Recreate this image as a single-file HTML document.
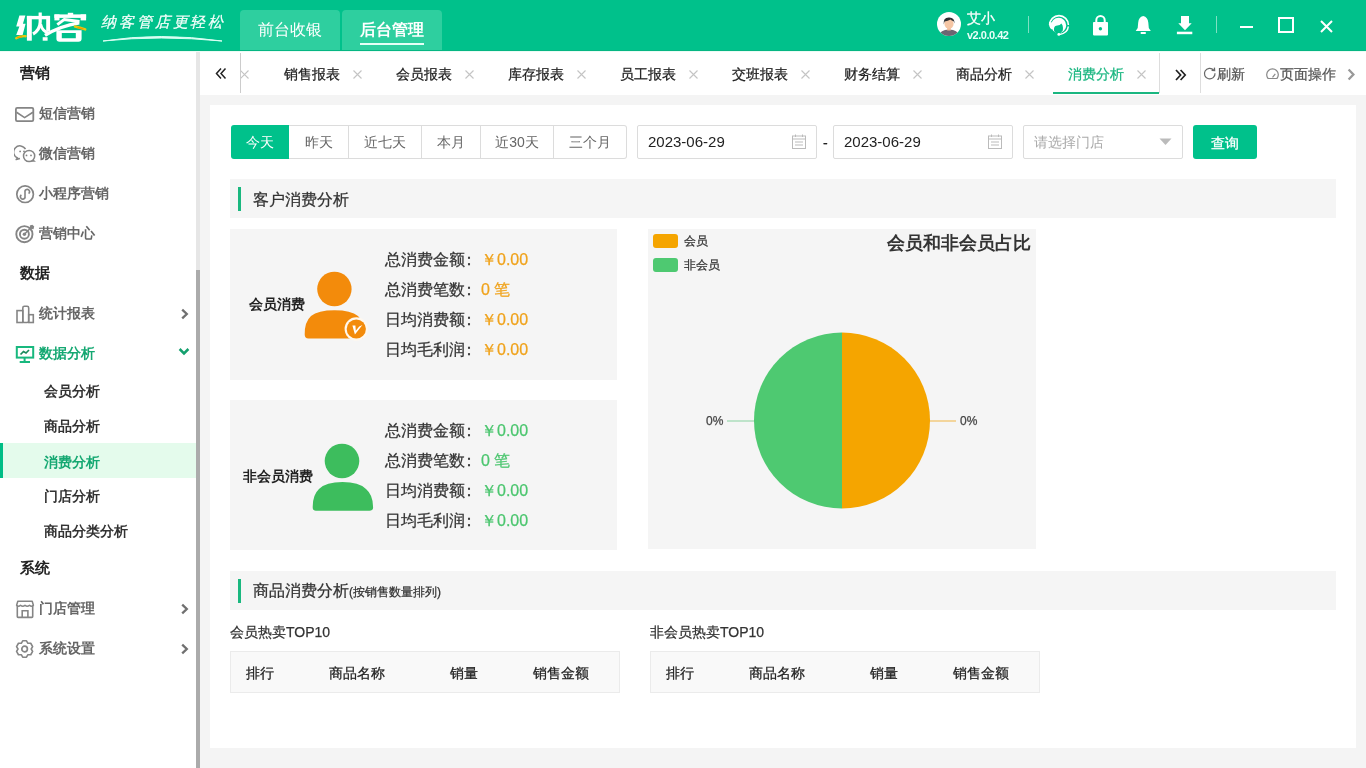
<!DOCTYPE html>
<html><head><meta charset="utf-8">
<style>
*{box-sizing:border-box;margin:0;padding:0}
html,body{width:1366px;height:768px;overflow:hidden;background:#f4f4f4;font-family:"Liberation Sans",sans-serif;color:#333}
.a{position:absolute}
.t{position:absolute;white-space:nowrap;line-height:20px;-webkit-text-stroke:0.25px currentColor}
.t[style*="bold"],.sh,.si,.ss{-webkit-text-stroke:0}
#hdr{left:0;top:0;width:1366px;height:51px;background:#00c18b}
.htab{top:10px;height:40px;width:100px;background:#2ecf9f;border-radius:4px 4px 0 0;color:#fff;font-size:16px;line-height:40px;text-align:center}
#side{left:0;top:50px;width:196px;height:718px;background:#fff}
#sb{left:196px;top:50px;width:4px;height:718px;background:#e6e6e6}
#sbt{left:196px;top:270px;width:4px;height:498px;background:#ababab}
.sh{left:20px;font-size:15px;font-weight:bold;color:#222}
.si{left:39px;font-size:14px;font-weight:bold;color:#666}
.ss{left:44px;font-size:14px;font-weight:bold;color:#333}
.ic{position:absolute}
#tabbar{left:200px;top:50px;width:1166px;height:45px;background:#fff}
.tb{top:64px;font-size:14px;color:#222}
.tx{top:64px;font-size:15px;color:#bbb}
#card{left:210px;top:105px;width:1146px;height:643px;background:#fff}
.btn{top:125px;height:34px;font-size:14px;line-height:32px;color:#666;text-align:center;border:1px solid #dcdcdc;border-left:none;background:#fff}
.inp{top:125px;height:34px;border:1px solid #dcdcdc;border-radius:2px;background:#fff;font-size:15px;line-height:31px;color:#222}
.sec{left:230px;width:1106px;height:39px;background:#f5f5f5}
.secb{position:absolute;left:8px;width:3px;background:#1ab87f}
.box{background:#f5f5f5}
.ln{left:385px;font-size:16px;color:#333;line-height:20px}
.vo{color:#f0a31c}
.vg{color:#4cc66f}
.th{height:42px;border:1px solid #ebebeb;background:#f9f9f9}
.thc{top:662.5px;font-size:14px;color:#222}
</style></head><body><div style="will-change:transform;position:absolute;left:0;top:0;width:1366px;height:768px">

<!-- header -->
<div id="hdr" class="a"></div>
<svg class="a" style="left:0;top:0" width="95" height="50" viewBox="0 0 95 50">
 <path d="M19.4 15.4 L25.4 15.4 L22.9 23.8 L25.6 23.8 L22.6 35 L16.2 35 L19.4 26.6 L16.2 26.6 Z" fill="#fff"/>
 <path d="M16.2 38.2 Q20 35.8 25.6 36.2" stroke="#e9c70f" stroke-width="2.4" fill="none" stroke-linecap="round"/>
 <path d="M17.6 37.6 Q19.5 36.9 21.5 36.9" stroke="#f29a00" stroke-width="1.3" fill="none" stroke-linecap="round"/>
 <rect x="26.9" y="15.9" width="4.9" height="24.8" fill="#fff"/>
 <rect x="26.9" y="15.9" width="23" height="3.4" fill="#fff"/>
 <rect x="46.2" y="15.9" width="3.9" height="15.5" fill="#fff"/>
 <path d="M40.2 12.5 V22 Q40 30 33 34" stroke="#fff" stroke-width="3.2" fill="none"/>
 <path d="M40.5 24 Q42 31 49 33.5" stroke="#fff" stroke-width="3" fill="none"/>
 <rect x="42.7" y="37.2" width="4.9" height="3.5" fill="#fff"/>
 <rect x="67.8" y="12.8" width="5.4" height="3" fill="#fff"/>
 <rect x="54.4" y="14.4" width="31.7" height="3.5" fill="#fff"/>
 <rect x="54.4" y="14.4" width="5.1" height="6" fill="#fff"/>
 <rect x="80.6" y="14.4" width="5.5" height="6" fill="#fff"/>
 <path d="M57.3 24.6 L64 19.6 L79.5 21.6" stroke="#fff" stroke-width="3" fill="none" stroke-linejoin="round"/>
 <path d="M45 35.4 Q60 26 79.3 22.9" stroke="#fff" stroke-width="3.4" fill="none"/>
 <path d="M75 26.6 Q80 27.6 85.2 29.4" stroke="#e9c70f" stroke-width="2.5" fill="none" stroke-linecap="round"/>
 <path d="M78 27.6 Q80.5 28.2 83 28.8" stroke="#f29a00" stroke-width="1.3" fill="none" stroke-linecap="round"/>
 <path d="M56.4 30.3 H81.6 V38.5 Q81.6 41.7 78.4 41.7 H59.6 Q56.4 41.7 56.4 38.5 Z M61.8 33 V38.3 H75.8 V33 Z" fill="#fff" fill-rule="evenodd"/>
</svg>
<div class="t" style="left:101px;top:12px;font-size:15px;line-height:20px;color:#f4fffb;letter-spacing:2.9px;font-style:italic;font-weight:400">纳客管店更轻松</div>
<svg class="a" style="left:100px;top:32px" width="125" height="12"><path d="M3 9 Q60 0 122 9 Q60 3 3 9Z" fill="#d9fff3" stroke="#d9fff3" stroke-width="1"/></svg>
<div class="a htab" style="left:240px">前台收银</div>
<div class="a htab" style="left:342px;font-weight:bold">后台管理</div>
<div class="a" style="left:360px;top:43px;width:64px;height:2px;background:#e6fff7"></div>

<!-- header right -->
<div class="a" style="left:937px;top:12px;width:24px;height:24px;border-radius:50%;background:#fff;overflow:hidden">
 <svg width="24" height="24"><path d="M2 24 Q3 17.5 12 17.5 Q21 17.5 22 24Z" fill="#6c6672"/><rect x="10.2" y="14.5" width="3.6" height="4" fill="#f0bb98"/><ellipse cx="12" cy="11.8" rx="4.6" ry="5" fill="#f5c6a5"/><path d="M6.6 12.5 Q6 5.2 12 5.4 Q17.6 5.2 17.6 11.5 L16.6 9.2 Q14.5 8.6 13.5 7.6 Q11 9.4 7.6 9.4Z" fill="#2f2f33"/></svg>
</div>
<div class="t" style="left:967px;top:8.5px;font-size:13.5px;color:#fff">艾小</div>
<div class="t" style="left:967px;top:28px;font-size:11px;font-weight:bold;color:#e8fff8;line-height:14px;letter-spacing:-0.5px">v2.0.0.42</div>
<div class="a" style="left:1028px;top:16px;width:1px;height:17px;background:#7fe0c3"></div>
<!-- headset -->
<svg class="a" style="left:1045px;top:10px" width="26" height="28" viewBox="0 0 26 28"><path d="M4.6 15 A9.4 9.4 0 0 1 23.4 15" fill="none" stroke="#fff" stroke-width="1.6"/><circle cx="13.6" cy="15.4" r="7.6" fill="#fff"/><path d="M9 18.4 Q9.4 15.4 12.4 15.4 Q15 15.4 16.4 13.4 L17.6 15.4 Q18.4 18.4 17.8 20.6 Q16.4 23.4 13.4 23.4 Q10 23.4 9 20.4 Z" fill="#00c18b"/><path d="M4 12 Q3.4 17 6.5 19.5 L8 17 Q6.8 15 7.4 12.5Z" fill="#fff"/><path d="M23.3 16.5 Q22.8 23 14.5 24.6" fill="none" stroke="#fff" stroke-width="1.5"/><circle cx="13.8" cy="24.4" r="1.4" fill="#fff"/></svg>
<!-- lock -->
<svg class="a" style="left:1092px;top:15px" width="17" height="21" viewBox="0 0 17 21"><path d="M4.3 7.5 V5.2 A4.2 4.2 0 0 1 12.7 5.2 V7.5" fill="none" stroke="#fff" stroke-width="2"/><rect x="1" y="7" width="15" height="13.4" rx="0.8" fill="#fff"/><circle cx="8.4" cy="13.8" r="1.7" fill="#00c18b"/></svg>
<!-- bell -->
<svg class="a" style="left:1135px;top:15px" width="17" height="20" viewBox="0 0 17 20"><path d="M8.2 1 C5 1.6 3.6 4 3.2 7.5 L2.7 13 L0.7 15.9 H15.8 L13.8 13 L13.3 7.5 C12.9 4 11.4 1.6 8.2 1 Z" fill="#fff"/><rect x="5.6" y="17" width="5.3" height="1.9" rx="0.6" fill="#fff"/></svg>
<!-- download -->
<svg class="a" style="left:1176px;top:15px" width="17" height="20" viewBox="0 0 17 20"><path d="M5 1 H13 V8.2 H15.7 L9 15.3 L2.3 8.2 H5 Z" fill="#fff"/><rect x="0.9" y="16.7" width="15.4" height="2.5" fill="#fff"/></svg>
<div class="a" style="left:1216px;top:16px;width:1px;height:17px;background:#7fe0c3"></div>
<div class="a" style="left:1240px;top:26px;width:13px;height:2px;background:#fff"></div>
<div class="a" style="left:1278px;top:17px;width:16px;height:16px;border:2px solid #fff"></div>
<svg class="a" style="left:1320px;top:20px" width="13" height="13" viewBox="0 0 13 13"><path d="M1 1 L12 12 M12 1 L1 12" stroke="#fff" stroke-width="2"/></svg>

<!-- sidebar -->
<div id="side" class="a"></div>
<div id="sb" class="a"></div>
<div id="sbt" class="a"></div>

<div class="t sh" style="top:63px">营销</div>
<svg class="ic" style="left:15px;top:107px" width="20" height="15" viewBox="0 0 20 15"><rect x="0.9" y="0.9" width="17.4" height="13.2" rx="1.3" fill="none" stroke="#858585" stroke-width="1.8"/><path d="M1.5 5.3 L9.6 10.6 L17.9 5.3" fill="none" stroke="#858585" stroke-width="1.7"/></svg>
<div class="t si" style="top:103px">短信营销</div>
<svg class="ic" style="left:14px;top:144px" width="22" height="19" viewBox="0 0 22 19"><path d="M11.5 5.2 A6.3 6.3 0 1 0 3.6 14 L2.2 15.6 L6 14.6" fill="none" stroke="#858585" stroke-width="1.5" stroke-linejoin="round"/><circle cx="15.1" cy="12" r="5.6" fill="#fff" stroke="#858585" stroke-width="1.5"/><path d="M19 16 L20.3 17.2 L17.6 17.2" fill="none" stroke="#858585" stroke-width="1.3"/><circle cx="6.1" cy="7.4" r="0.9" fill="#858585"/><circle cx="10" cy="7.4" r="0.9" fill="#858585"/><circle cx="12.5" cy="11.4" r="0.9" fill="#858585"/><circle cx="17" cy="11.4" r="0.9" fill="#858585"/></svg>
<div class="t si" style="top:143px">微信营销</div>
<svg class="ic" style="left:15px;top:184px" width="20" height="20" viewBox="0 0 20 20"><circle cx="10.1" cy="10.2" r="8.3" fill="none" stroke="#858585" stroke-width="1.7"/><path d="M6.4 10.9 A2.3 2.3 0 1 0 10 12.3 V8.2 A2.3 2.3 0 1 1 13.6 9.6" fill="none" stroke="#858585" stroke-width="1.6"/></svg>
<div class="t si" style="top:183px">小程序营销</div>
<svg class="ic" style="left:15px;top:224px" width="20" height="20" viewBox="0 0 20 20"><circle cx="9.4" cy="10.2" r="8.1" fill="none" stroke="#858585" stroke-width="1.9"/><circle cx="9.4" cy="10.2" r="4.5" fill="none" stroke="#858585" stroke-width="1.9"/><circle cx="9.4" cy="10.2" r="1.7" fill="#858585"/><path d="M9.4 10.2 L16.3 3.3" stroke="#858585" stroke-width="1.5"/><path d="M14.8 1.5 L15.2 4.8 L18.5 5.2 L19.2 2.6 L17.4 0.8Z" fill="#858585"/></svg>
<div class="t si" style="top:223px">营销中心</div>

<div class="t sh" style="top:263px">数据</div>
<svg class="ic" style="left:15px;top:303px" width="20" height="21" viewBox="0 0 20 21"><rect x="2" y="7.6" width="5.8" height="11.9" fill="none" stroke="#858585" stroke-width="1.6"/><rect x="7.8" y="3.3" width="5.9" height="16.2" rx="1.6" fill="none" stroke="#858585" stroke-width="1.6"/><rect x="13.7" y="11.7" width="4.6" height="7.8" fill="none" stroke="#858585" stroke-width="1.6"/></svg>
<div class="t si" style="top:303px">统计报表</div>
<svg class="ic" style="left:180px;top:308px" width="9" height="12" viewBox="0 0 9 12"><path d="M2.2 1.6 L6.8 6 L2.2 10.4" fill="none" stroke="#707070" stroke-width="2.3"/></svg>
<svg class="ic" style="left:15px;top:344px" width="20" height="20" viewBox="0 0 20 20"><rect x="1.8" y="3" width="16.4" height="10.6" fill="none" stroke="#18b87e" stroke-width="2"/><path d="M5.5 10.5 L8.5 7.5 L11 9 L14 6" fill="none" stroke="#1a8a5c" stroke-width="1.7"/><path d="M9.6 13.6 V17.9 M4.7 17.9 H15" stroke="#18b87e" stroke-width="2"/></svg>
<div class="t si" style="top:343px;color:#15a872">数据分析</div>
<svg class="ic" style="left:178px;top:347px" width="12" height="9" viewBox="0 0 12 9"><path d="M1.6 2 L6 6.4 L10.4 2" fill="none" stroke="#14a06e" stroke-width="2.5"/></svg>

<div class="t ss" style="top:381px">会员分析</div>
<div class="t ss" style="top:416px">商品分析</div>
<div class="a" style="left:0;top:443px;width:196px;height:35px;background:#e4fbec"></div>
<div class="a" style="left:0;top:443px;width:3px;height:35px;background:#00bd86"></div>
<div class="t ss" style="top:451.5px;color:#15a872">消费分析</div>
<div class="t ss" style="top:486px">门店分析</div>
<div class="t ss" style="top:521px">商品分类分析</div>

<div class="t sh" style="top:558px">系统</div>
<svg class="ic" style="left:15px;top:599px" width="20" height="20" viewBox="0 0 20 20"><path d="M2.3 6.5 V17.6 Q2.3 18.4 3.1 18.4 H16.9 Q17.7 18.4 17.7 17.6 V6.5" fill="none" stroke="#858585" stroke-width="1.6"/><path d="M1.6 6.3 L2.8 2.2 H17.2 L18.4 6.3 Q16.5 8.3 14.5 6.3 Q12.2 8.3 10 6.3 Q7.8 8.3 5.5 6.3 Q3.5 8.3 1.6 6.3Z" fill="none" stroke="#858585" stroke-width="1.5" stroke-linejoin="round"/><path d="M7.2 18.4 V11.8 H12.9 V18.4" fill="none" stroke="#858585" stroke-width="1.6"/></svg>
<div class="t si" style="top:598px">门店管理</div>
<svg class="ic" style="left:180px;top:603px" width="9" height="12" viewBox="0 0 9 12"><path d="M2.2 1.6 L6.8 6 L2.2 10.4" fill="none" stroke="#707070" stroke-width="2.3"/></svg>
<svg class="ic" style="left:15px;top:639px" width="20" height="21" viewBox="0 0 20 21"><path d="M7.71 1.82 L11.49 1.82 L12.90 4.28 L15.74 4.27 L17.63 7.54 L16.20 10.00 L17.63 12.46 L15.74 15.73 L12.90 15.72 L11.49 18.18 L7.71 18.18 L6.30 15.72 L3.46 15.73 L1.57 12.46 L3.00 10.00 L1.57 7.54 L3.46 4.27 L6.30 4.28Z" fill="none" stroke="#858585" stroke-width="1.6" stroke-linejoin="round"/><circle cx="9.6" cy="10" r="2.8" fill="none" stroke="#858585" stroke-width="1.7"/></svg>
<div class="t si" style="top:638px">系统设置</div>
<svg class="ic" style="left:180px;top:643px" width="9" height="12" viewBox="0 0 9 12"><path d="M2.2 1.6 L6.8 6 L2.2 10.4" fill="none" stroke="#707070" stroke-width="2.3"/></svg>

<!-- tab bar -->
<div id="tabbar" class="a"></div>
<svg class="a" style="left:214px;top:67px" width="14" height="13" viewBox="0 0 14 13"><path d="M7 1.5 L2.5 6.5 L7 11.5 M11.5 1.5 L7 6.5 L11.5 11.5" fill="none" stroke="#222" stroke-width="1.5"/></svg>
<div class="a" style="left:240px;top:53px;width:1px;height:40px;background:#ccc"></div>
<div class="a" style="left:241px;top:50px;width:918px;height:45px;overflow:hidden">
 <svg class="a" style="left:-1px;top:20px" width="9" height="9" viewBox="0 0 9 9"><path d="M0.5 0.5 L8.5 8.5 M8.5 0.5 L0.5 8.5" stroke="#c4c4c4" stroke-width="1.1"/></svg>
</div>
<div class="t tb" style="left:284px">销售报表</div><svg class="a" style="left:353px;top:70px" width="9" height="9" viewBox="0 0 9 9"><path d="M0.5 0.5 L8.5 8.5 M8.5 0.5 L0.5 8.5" stroke="#c4c4c4" stroke-width="1.1"/></svg>
<div class="t tb" style="left:396px">会员报表</div><svg class="a" style="left:465px;top:70px" width="9" height="9" viewBox="0 0 9 9"><path d="M0.5 0.5 L8.5 8.5 M8.5 0.5 L0.5 8.5" stroke="#c4c4c4" stroke-width="1.1"/></svg>
<div class="t tb" style="left:508px">库存报表</div><svg class="a" style="left:577px;top:70px" width="9" height="9" viewBox="0 0 9 9"><path d="M0.5 0.5 L8.5 8.5 M8.5 0.5 L0.5 8.5" stroke="#c4c4c4" stroke-width="1.1"/></svg>
<div class="t tb" style="left:620px">员工报表</div><svg class="a" style="left:689px;top:70px" width="9" height="9" viewBox="0 0 9 9"><path d="M0.5 0.5 L8.5 8.5 M8.5 0.5 L0.5 8.5" stroke="#c4c4c4" stroke-width="1.1"/></svg>
<div class="t tb" style="left:732px">交班报表</div><svg class="a" style="left:801px;top:70px" width="9" height="9" viewBox="0 0 9 9"><path d="M0.5 0.5 L8.5 8.5 M8.5 0.5 L0.5 8.5" stroke="#c4c4c4" stroke-width="1.1"/></svg>
<div class="t tb" style="left:844px">财务结算</div><svg class="a" style="left:913px;top:70px" width="9" height="9" viewBox="0 0 9 9"><path d="M0.5 0.5 L8.5 8.5 M8.5 0.5 L0.5 8.5" stroke="#c4c4c4" stroke-width="1.1"/></svg>
<div class="t tb" style="left:956px">商品分析</div><svg class="a" style="left:1025px;top:70px" width="9" height="9" viewBox="0 0 9 9"><path d="M0.5 0.5 L8.5 8.5 M8.5 0.5 L0.5 8.5" stroke="#c4c4c4" stroke-width="1.1"/></svg>
<div class="t tb" style="left:1068px;color:#1ab680">消费分析</div><svg class="a" style="left:1137px;top:70px" width="9" height="9" viewBox="0 0 9 9"><path d="M0.5 0.5 L8.5 8.5 M8.5 0.5 L0.5 8.5" stroke="#c4c4c4" stroke-width="1.1"/></svg>
<div class="a" style="left:1053px;top:92px;width:106px;height:2px;background:#1ab680"></div>
<div class="a" style="left:1159px;top:53px;width:1px;height:40px;background:#ddd"></div>
<svg class="a" style="left:1174px;top:67px" width="14" height="15" viewBox="0 0 14 15"><path d="M2 3 L6.6 8 L2 13 M6.6 3 L11.2 8 L6.6 13" fill="none" stroke="#222" stroke-width="1.7"/></svg>
<div class="a" style="left:1200px;top:53px;width:1px;height:40px;background:#ddd"></div>
<svg class="a" style="left:1203px;top:67px" width="14" height="14" viewBox="0 0 14 14"><path d="M10.6 3 A5.3 5.3 0 1 0 12 6.2" fill="none" stroke="#666" stroke-width="1.2"/><path d="M8.6 3.4 L11.6 3.6 L11.4 0.6" fill="none" stroke="#666" stroke-width="1.3"/></svg>
<div class="t" style="left:1217px;top:64px;font-size:14px;color:#555">刷新</div>
<svg class="a" style="left:1266px;top:68px" width="14" height="13" viewBox="0 0 14 13"><path d="M2.1 10.5 A5.8 5.8 0 1 1 10.9 10.5 Z" fill="none" stroke="#888" stroke-width="1.2" stroke-linejoin="round"/><path d="M6.5 9.3 L9.3 5.8" stroke="#888" stroke-width="1.2"/></svg>
<div class="t" style="left:1280px;top:64px;font-size:14px;color:#555">页面操作</div>
<svg class="a" style="left:1346px;top:68px" width="10" height="13" viewBox="0 0 10 13"><path d="M2.6 1.5 L7.4 6.5 L2.6 11.5" fill="none" stroke="#999" stroke-width="2.3"/></svg>

<div class="a" style="left:0;top:50px;width:1366px;height:1px;background:#06b683"></div><div class="a" style="left:0;top:51px;width:1366px;height:1px;background:#ebfcf5"></div>
<!-- content card -->
<div id="card" class="a"></div>

<div class="a btn" style="left:231px;width:58px;background:#00c18b;color:#fff;border:none;border-radius:3px 0 0 3px;line-height:34px">今天</div>
<div class="a btn" style="left:289px;width:60px">昨天</div>
<div class="a btn" style="left:349px;width:73px">近七天</div>
<div class="a btn" style="left:422px;width:59px">本月</div>
<div class="a btn" style="left:481px;width:73px">近30天</div>
<div class="a btn" style="left:554px;width:73px;border-radius:0 3px 3px 0">三个月</div>

<div class="a inp" style="left:637px;width:180px;padding-left:10px">2023-06-29</div>
<svg class="a" style="left:792px;top:134px" width="14" height="15" viewBox="0 0 14 15"><rect x="0.5" y="2" width="13" height="12.5" fill="none" stroke="#bbb" stroke-width="1"/><path d="M0.5 5 H13.5 M3.5 0.5 V3 M10.5 0.5 V3 M3 8 H11 M3 11 H11" stroke="#bbb" stroke-width="1"/></svg>
<div class="t" style="left:823px;top:133px;font-size:14px;color:#222">-</div>
<div class="a inp" style="left:833px;width:180px;padding-left:10px">2023-06-29</div>
<svg class="a" style="left:988px;top:134px" width="14" height="15" viewBox="0 0 14 15"><rect x="0.5" y="2" width="13" height="12.5" fill="none" stroke="#bbb" stroke-width="1"/><path d="M0.5 5 H13.5 M3.5 0.5 V3 M10.5 0.5 V3 M3 8 H11 M3 11 H11" stroke="#bbb" stroke-width="1"/></svg>
<div class="a inp" style="left:1023px;width:160px;padding-left:10px;color:#aaa;font-size:14px;line-height:32px">请选择门店</div>
<svg class="a" style="left:1159px;top:138px" width="13" height="8" viewBox="0 0 13 8"><path d="M0.5 0.5 H12.5 L6.5 7Z" fill="#bbb"/></svg>
<div class="a" style="left:1193px;top:125px;width:64px;height:34px;background:#00c18b;border-radius:3px;color:#fff;font-size:14px;line-height:37px;text-align:center;-webkit-text-stroke:0.3px #fff">查询</div>

<!-- section 1 -->
<div class="a sec" style="top:179px"><div class="secb" style="top:8px;height:24px"></div></div>
<div class="t" style="left:253px;top:190px;font-size:16px;color:#333">客户消费分析</div>

<div class="a box" style="left:230px;top:229px;width:387px;height:151px"></div>
<div class="t" style="left:249px;top:295px;font-size:13.5px;font-weight:bold;color:#222">会员消费</div>
<svg class="a" style="left:303px;top:270px" width="70" height="75" viewBox="0 0 70 75"><circle cx="31.4" cy="19" r="17.2" fill="#f38b0b"/><path d="M1.7 64.5 Q1.5 52 8 46 Q15 40.3 31.5 40.3 Q48 40.3 55 46 Q60 51 60 60 L60 68.4 L5.5 68.4 Q1.7 68.4 1.7 64.5 Z" fill="#f38b0b"/><circle cx="53.3" cy="59" r="11.7" fill="#fff8ee"/><circle cx="53.3" cy="59" r="9.6" fill="#f38b0b"/><path d="M49.4 55.6 L51.9 64.4 L59.4 55 L56.2 56.4 L52.8 60.8 L52.4 55.4 Z" fill="#fff"/></svg>
<div class="t ln" style="top:250px">总消费金额<span style="margin-left:-4px;margin-right:4px">：</span><span class="vo">￥0.00</span></div>
<div class="t ln" style="top:280px">总消费笔数<span style="margin-left:-4px;margin-right:4px">：</span><span class="vo">0 笔</span></div>
<div class="t ln" style="top:310px">日均消费额<span style="margin-left:-4px;margin-right:4px">：</span><span class="vo">￥0.00</span></div>
<div class="t ln" style="top:340px">日均毛利润<span style="margin-left:-4px;margin-right:4px">：</span><span class="vo">￥0.00</span></div>

<div class="a box" style="left:230px;top:400px;width:387px;height:150px"></div>
<div class="t" style="left:243px;top:467px;font-size:13.5px;font-weight:bold;color:#222">非会员消费</div>
<svg class="a" style="left:312px;top:443px" width="62" height="70" viewBox="0 0 62 70"><circle cx="30" cy="18" r="17.3" fill="#3dbd5d"/><path d="M0.7 64.5 Q0.5 52 7 46 Q14 39.1 30.5 39.1 Q47 39.1 54 46 Q61.2 52 61.1 64.5 Q61 67.8 57.5 67.8 L4 67.8 Q0.7 67.8 0.7 64.5 Z" fill="#3dbd5d"/></svg>
<div class="t ln" style="top:421px">总消费金额<span style="margin-left:-4px;margin-right:4px">：</span><span class="vg">￥0.00</span></div>
<div class="t ln" style="top:451px">总消费笔数<span style="margin-left:-4px;margin-right:4px">：</span><span class="vg">0 笔</span></div>
<div class="t ln" style="top:481px">日均消费额<span style="margin-left:-4px;margin-right:4px">：</span><span class="vg">￥0.00</span></div>
<div class="t ln" style="top:511px">日均毛利润<span style="margin-left:-4px;margin-right:4px">：</span><span class="vg">￥0.00</span></div>

<!-- chart -->
<div class="a box" style="left:648px;top:229px;width:388px;height:320px"></div>
<div class="a" style="left:653px;top:234px;width:25px;height:14px;border-radius:3px;background:#f5a500"></div>
<div class="t" style="left:684px;top:231px;font-size:12px;color:#333">会员</div>
<div class="a" style="left:653px;top:258px;width:25px;height:14px;border-radius:3px;background:#4ec971"></div>
<div class="t" style="left:684px;top:255px;font-size:12px;color:#333">非会员</div>
<div class="t" style="left:887px;top:232px;font-size:18px;line-height:22px;font-weight:bold;color:#333">会员和非会员占比</div>
<svg class="a" style="left:648px;top:229px" width="388" height="320" viewBox="0 0 388 320">
 <path d="M194 103.5 A88 88 0 0 1 194 279.5 Z" fill="#f5a500"/>
 <path d="M194 279.5 A88 88 0 0 1 194 103.5 Z" fill="#4ec971"/>
 <path d="M282 192 H308" stroke="#f2c062" stroke-width="1.2"/>
 <path d="M79 192 H106" stroke="#9ad8ae" stroke-width="1.2"/>
</svg>
<div class="t" style="left:706px;top:411px;font-size:12px;color:#444">0%</div>
<div class="t" style="left:960px;top:411px;font-size:12px;color:#444">0%</div>

<!-- section 2 -->
<div class="a sec" style="top:571px"><div class="secb" style="top:8px;height:24px"></div></div>
<div class="t" style="left:253px;top:581px;font-size:16px;color:#333">商品消费分析<span style="font-size:12px">(按销售数量排列)</span></div>

<div class="t" style="left:230px;top:622px;font-size:14px;color:#333">会员热卖TOP10</div>
<div class="a th" style="left:230px;top:651px;width:390px"></div>
<div class="t thc" style="left:246px">排行</div>
<div class="t thc" style="left:329px">商品名称</div>
<div class="t thc" style="left:450px">销量</div>
<div class="t thc" style="left:533px">销售金额</div>

<div class="t" style="left:650px;top:622px;font-size:14px;color:#333">非会员热卖TOP10</div>
<div class="a th" style="left:650px;top:651px;width:390px"></div>
<div class="t thc" style="left:666px">排行</div>
<div class="t thc" style="left:749px">商品名称</div>
<div class="t thc" style="left:870px">销量</div>
<div class="t thc" style="left:953px">销售金额</div>

</div></body></html>
